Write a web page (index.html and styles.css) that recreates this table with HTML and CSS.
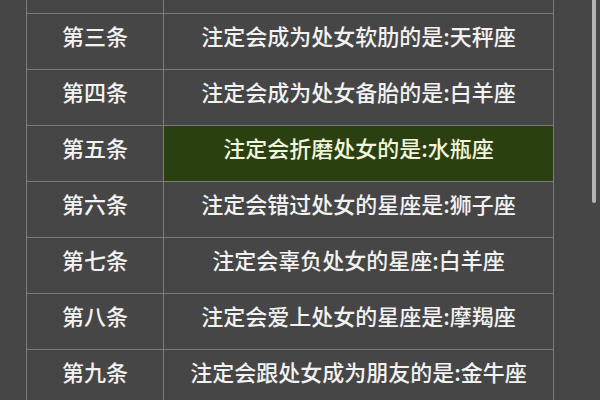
FILE: index.html
```html
<!DOCTYPE html>
<html lang="zh">
<head>
<meta charset="utf-8">
<link rel="stylesheet" href="styles.css">
</head>
<body>
<div class="page">
  <div class="table">
    <div class="cell"></div><div class="cell"></div>
    <div class="cell">第三条</div><div class="cell">注定会成为处女软肋的是:天秤座</div>
    <div class="cell">第四条</div><div class="cell">注定会成为处女备胎的是:白羊座</div>
    <div class="cell">第五条</div><div class="cell hl">注定会折磨处女的是:水瓶座</div>
    <div class="cell">第六条</div><div class="cell">注定会错过处女的星座是:狮子座</div>
    <div class="cell">第七条</div><div class="cell">注定会辜负处女的星座:白羊座</div>
    <div class="cell">第八条</div><div class="cell">注定会爱上处女的星座是:摩羯座</div>
    <div class="cell">第九条</div><div class="cell">注定会跟处女成为朋友的是:金牛座</div>
    <div class="cell"></div><div class="cell"></div>
  </div>
  <div class="scrollbar"></div>
</div>
</body>
</html>
```

FILE: styles.css
```css
html, body {
  margin: 0;
  padding: 0;
  background: #464646;
  overflow: hidden;
}
.page {
  position: relative;
  width: 600px;
  height: 400px;
  overflow: hidden;
}
.table {
  display: grid;
  grid-template-columns: 137px 390px;
  grid-auto-rows: 56px;
  margin-left: 26px;
  margin-top: -42px;
  width: 528px;
  border-left: 1px solid #7c7c7c;
}
.cell {
  box-sizing: border-box;
  border-right: 1px solid #7c7c7c;
  border-bottom: 1px solid #7c7c7c;
  display: flex;
  align-items: center;
  justify-content: center;
  padding-bottom: 13px;
  font-family: "Noto Sans CJK SC", "Noto Sans", sans-serif;
  font-size: 22px;
  font-weight: 500;
  color: #f2f2f2;
  white-space: nowrap;
}
.cell.hl {
  background: #2b4010;
  color: #f1f5de;
}
.scrollbar {
  position: absolute;
  top: 0;
  left: 592px;
  width: 4px;
  height: 203px;
  border-radius: 0 0 2px 2px;
  background: #b3b3b3;
}
```
